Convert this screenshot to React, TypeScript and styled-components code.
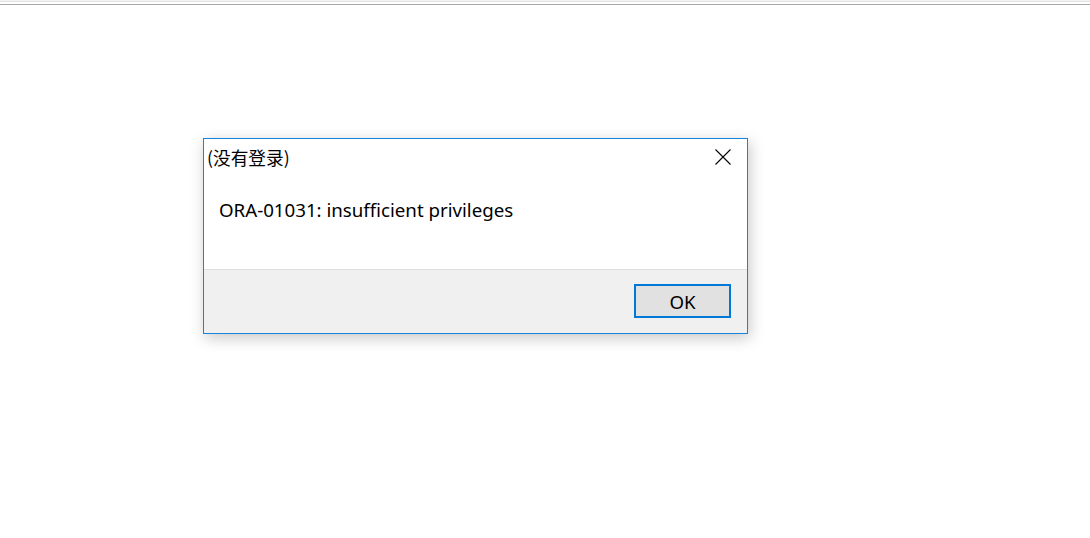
import React from "react";
import styled, { createGlobalStyle } from "styled-components";

const Global = createGlobalStyle`
  html, body { margin: 0; padding: 0; background: #ffffff; }
  body { font-family: "Segoe UI", "Noto Sans", "Noto Sans CJK SC", sans-serif; }
`;

const Page = styled.div`
  width: 1090px;
  height: 538px;
  background: #ffffff;
  display: flex;
  flex-direction: column;
  overflow: hidden;
`;

const TopEdge = styled.div`
  height: 5px;
  flex: none;
  box-sizing: border-box;
  border-top: 1px solid #f3f3f3;
  border-bottom: 1px solid #a8a8a8;
  background: linear-gradient(#e2e2e2 0 1px, #ffffff 1px);
`;

const Stage = styled.div`
  flex: 1;
  padding: 133px 0 0 203px;
`;

const Dialog = styled.div`
  width: 545px;
  height: 196px;
  box-sizing: border-box;
  border: 1px solid #1883d7;
  background: #ffffff;
  display: flex;
  flex-direction: column;
  box-shadow: 2px 4px 14px rgba(0, 0, 0, 0.22);
`;

const TitleBar = styled.div`
  height: 35px;
  display: flex;
  align-items: center;
  justify-content: space-between;
  padding: 1px 16px 0 3px;
  box-sizing: border-box;
  flex: none;
`;

const Title = styled.span`
  font-family: "Noto Sans CJK SC", "Noto Sans", sans-serif;
  font-size: 17.7px;
  color: #000;
  line-height: 20px;
`;

const Close = styled.div`
  width: 16px;
  height: 16px;
  display: flex;
  align-items: center;
  justify-content: center;
`;

const Body = styled.div`
  flex: 1;
  padding: 24px 0 0 15px;
`;

const Message = styled.div`
  font-family: "Noto Sans", sans-serif;
  font-size: 18.7px;
  color: #000;
  line-height: 24px;
`;

const Footer = styled.div`
  height: 64px;
  box-sizing: border-box;
  flex: none;
  background: #f0f0f0;
  border-top: 1px solid #dfdfdf;
  display: flex;
  align-items: flex-start;
  justify-content: flex-end;
  padding: 14px 16px 0 0;
`;

const Button = styled.button`
  width: 97px;
  height: 34px;
  box-sizing: border-box;
  border: 2px solid #0078d7;
  background: #e1e1e1;
  font-family: "Noto Sans", sans-serif;
  font-size: 18.7px;
  color: #000;
  padding: 0;
  display: flex;
  align-items: center;
  justify-content: center;
`;

export default function App() {
  return (
    <>
      <Global />
      <Page>
        <TopEdge />
        <Stage>
          <Dialog>
            <TitleBar>
              <Title>(没有登录)</Title>
              <Close>
                <svg width="16" height="16" viewBox="0 0 16 16">
                  <path d="M0.5 0.5 L15.5 15.5 M15.5 0.5 L0.5 15.5" stroke="#000" strokeWidth="1.1" />
                </svg>
              </Close>
            </TitleBar>
            <Body>
              <Message>ORA-01031: insufficient privileges</Message>
            </Body>
            <Footer>
              <Button>OK</Button>
            </Footer>
          </Dialog>
        </Stage>
      </Page>
    </>
  );
}
